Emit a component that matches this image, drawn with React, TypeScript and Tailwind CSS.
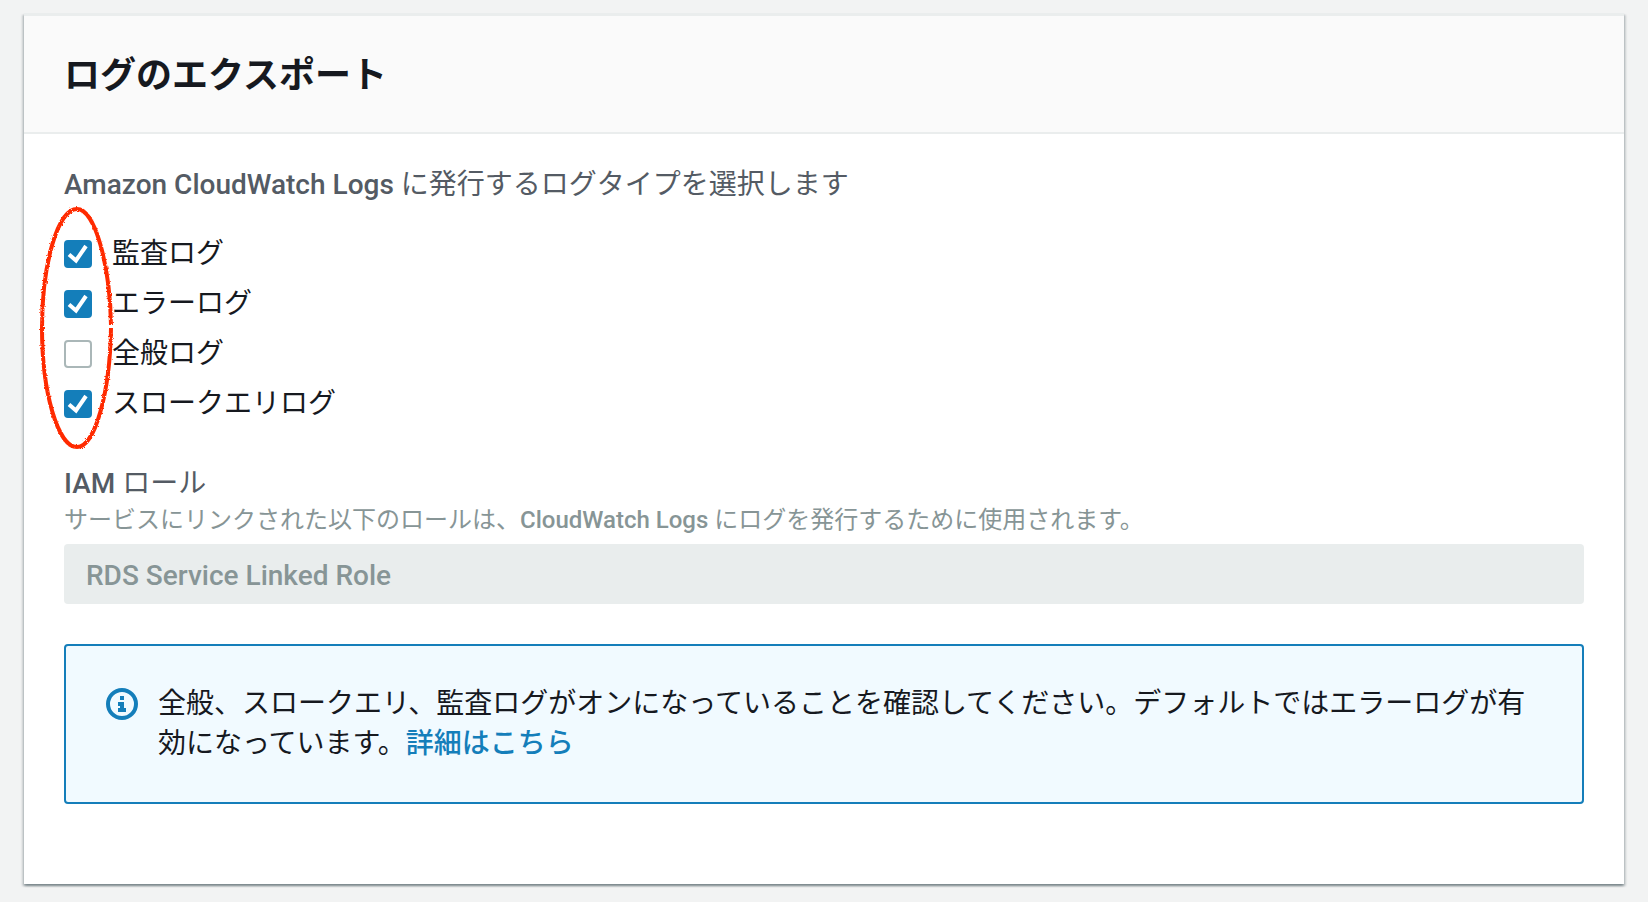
import { useId, useState } from "react";

// ============================================
// Data
// ============================================

interface LogType {
  id: string;
  label: string;
  enabled: boolean;
}

const LOG_TYPES: LogType[] = [
  { id: "audit", label: "監査ログ", enabled: true },
  { id: "error", label: "エラーログ", enabled: true },
  { id: "general", label: "全般ログ", enabled: false },
  { id: "slowquery", label: "スロークエリログ", enabled: true },
];

// ============================================
// Sub-Components
// ============================================

interface LogCheckboxProps {
  label: string;
  checked: boolean;
  onChange: (checked: boolean) => void;
}

function LogCheckbox({ label, checked, onChange }: LogCheckboxProps) {
  const id = useId();

  return (
    <div className="flex h-[50px] items-center gap-5">
      <span className="grid shrink-0">
        <input
          id={id}
          type="checkbox"
          checked={checked}
          onChange={(e) => onChange(e.target.checked)}
          className="col-start-1 row-start-1 size-7 appearance-none rounded-[4px] border-2 border-[#aab7b8] bg-white checked:border-[#147eba] checked:bg-[#147eba]"
        />
        {checked && (
          <svg
            viewBox="0 0 28 28"
            className="pointer-events-none col-start-1 row-start-1 size-7"
            fill="none"
            stroke="#fff"
            strokeWidth="4"
            aria-hidden="true"
          >
            <path d="M5 14.5 L12 20.5 L22 6" />
          </svg>
        )}
      </span>
      <label htmlFor={id} className="text-[28px] leading-10 text-[#16191f]">
        {label}
      </label>
    </div>
  );
}

function InfoIcon() {
  return (
    <svg viewBox="0 0 32 32" className="mt-1 size-8 shrink-0" aria-hidden="true">
      <circle cx="16" cy="16" r="14" fill="none" stroke="#147eba" strokeWidth="4" />
      <path
        d="M14 8h4v4h-4zM12 14h6v6h2v4h-8v-4h2v-2h-2z"
        fill="#147eba"
      />
    </svg>
  );
}

// Crayon-like ring around the checkbox column
function HighlightRing() {
  return (
    <svg
      viewBox="0 0 80 250"
      className="pointer-events-none absolute -top-[26px] -left-7 h-[250px] w-20"
      fill="none"
      stroke="#ff2b06"
      aria-hidden="true"
    >
      <filter id="crayon" x="-10%" y="-10%" width="120%" height="120%">
        <feTurbulence type="fractalNoise" baseFrequency="0.6" numOctaves="3" seed="4" />
        <feDisplacementMap in="SourceGraphic" scale="3" />
      </filter>
      <path
        d="M75 122 C74 62 59 6 41 6 C22 6 6 60 6 125 C6 190 22 244 41 244 C59 244 74 190 75 125"
        strokeWidth="4"
        filter="url(#crayon)"
      />
    </svg>
  );
}

// ============================================
// Main Component
// ============================================

export default function App() {
  const [logTypes, setLogTypes] = useState(LOG_TYPES);

  const toggle = (id: string, enabled: boolean) => {
    setLogTypes((prev) => prev.map((t) => (t.id === id ? { ...t, enabled } : t)));
  };

  return (
    <main
      lang="ja"
      className="min-h-screen bg-[#f2f3f3] px-6 pt-[13px] pb-[18px] font-['Roboto','Noto_Sans_CJK_JP',sans-serif]"
    >
      <section className="border-t-3 border-[#eaeded] bg-white pb-20 shadow-[0_2px_2px_0_rgba(0,28,36,0.3),2px_2px_2px_0_rgba(0,28,36,0.15),-2px_2px_2px_0_rgba(0,28,36,0.15)]">
        {/* Header */}
        <header className="border-b-2 border-[#eaeded] bg-[#fafafa] px-10 pt-[34px] pb-[30px]">
          <h2 className="text-4xl leading-[52px] font-bold text-[#16191f]">
            ログのエクスポート
          </h2>
        </header>

        <div className="px-10 pt-[29px]">
          {/* Log types */}
          <fieldset>
            <legend className="text-[28px] leading-11 text-[#545b64]">
              <span className="font-medium">Amazon CloudWatch Logs</span> に発行するログタイプを選択します
            </legend>
            <div className="relative mt-[22px]">
              <HighlightRing />
              {logTypes.map((type) => (
                <LogCheckbox
                  key={type.id}
                  label={type.label}
                  checked={type.enabled}
                  onChange={(enabled) => toggle(type.id, enabled)}
                />
              ))}
            </div>
          </fieldset>

          {/* IAM role */}
          <div className="mt-[33px]">
            <label htmlFor="iam-role" className="block text-[28px] leading-11 text-[#545b64]">
              <span className="font-medium">IAM</span> ロール
            </label>
            <p id="iam-role-hint" className="text-2xl leading-7 text-[#879596]">
              サービスにリンクされた以下のロールは、
              <span className="font-medium">CloudWatch Logs</span> にログを発行するために使用されます。
            </p>
            <input
              id="iam-role"
              type="text"
              disabled
              value="RDS Service Linked Role"
              aria-describedby="iam-role-hint"
              className="mt-2.5 block h-15 w-full rounded-[4px] bg-[#e9eded] px-[22px] pt-[3px] text-[28px] font-medium text-[#879596]"
            />
          </div>

          {/* Notice */}
          <div className="mt-10 flex gap-5 rounded-[4px] border-2 border-[#147eba] bg-[#f1faff] px-10 py-[38px]">
            <InfoIcon />
            <p className="text-[28px] leading-10 text-[#16191f]">
              全般、スロークエリ、監査ログがオンになっていることを確認してください。デフォルトではエラーログが有効になっています。
              <a href="#details" className="font-medium text-[#147eba] hover:underline">
                詳細はこちら
              </a>
            </p>
          </div>
        </div>
      </section>
    </main>
  );
}
